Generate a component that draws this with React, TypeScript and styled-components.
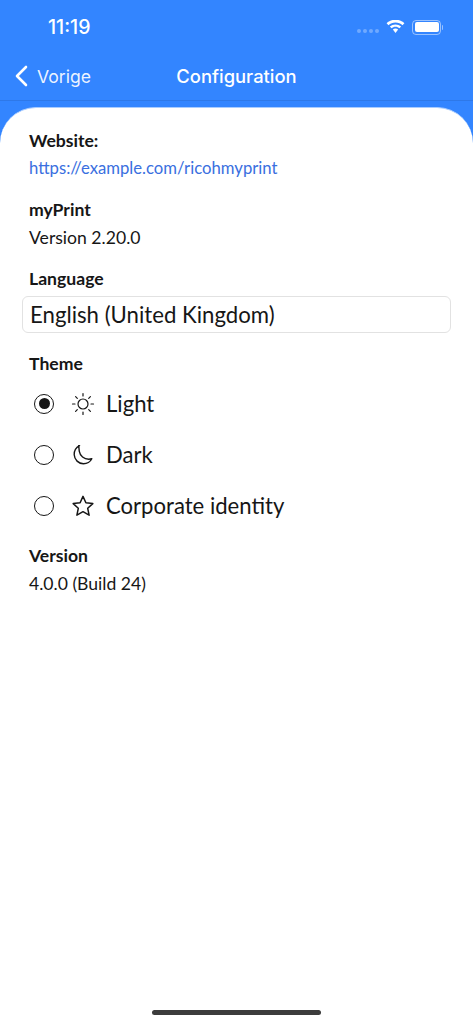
import React from 'react';
import styled, { createGlobalStyle } from 'styled-components';

const Global = createGlobalStyle`
  html, body { margin: 0; padding: 0; background: #fff; }
  body { font-family: Lato, "Liberation Sans", sans-serif; color: #161616; }
`;

const Page = styled.div`
  width: 473px;
  height: 1024px;
  background: #3385ff;
  display: flex;
  flex-direction: column;
  overflow: hidden;
  position: relative;
`;

const StatusBar = styled.div`
  height: 54px;
  flex-shrink: 0;
  display: flex;
  align-items: center;
  justify-content: space-between;
  padding: 0 32px 0 48px;
  box-sizing: border-box;
`;

const Clock = styled.span`
  font-family: Inter, sans-serif;
  font-size: 19.5px;
  font-weight: 500;
  color: #fff;
`;

const StatusIcons = styled.div`
  display: flex;
  align-items: center;
`;

const SignalDots = styled.div`
  display: flex;
  gap: 2px;
  margin: 8px 7px 0 0;
`;

const SignalDot = styled.i`
  width: 4px;
  height: 4px;
  border-radius: 50%;
  background: rgba(255, 255, 255, 0.3);
`;

const Battery = styled.div`
  width: 29px;
  height: 15px;
  margin-left: 7px;
  padding: 1.5px;
  box-sizing: border-box;
  border: 1px solid rgba(255, 255, 255, 0.5);
  border-radius: 4px;
  position: relative;

  &::before {
    content: '';
    display: block;
    height: 100%;
    background: #fff;
    border-radius: 2px;
  }

  &::after {
    content: '';
    position: absolute;
    right: -3px;
    top: 4px;
    width: 1.5px;
    height: 5px;
    background: rgba(255, 255, 255, 0.5);
    border-radius: 0 1px 1px 0;
  }
`;

const NavBar = styled.div`
  height: 47px;
  flex-shrink: 0;
  display: grid;
  grid-template-columns: 1fr auto 1fr;
  align-items: center;
  box-sizing: border-box;
  padding: 0 0 2px 14px;
  border-bottom: 1px solid #2e78e8;
  color: #fff;
  font-family: Inter, sans-serif;
`;

const BackLink = styled.div`
  display: flex;
  align-items: center;
  gap: 9px;
  font-size: 17.6px;
  color: rgba(255, 255, 255, 0.92);
`;

const NavTitle = styled.div`
  font-size: 18.4px;
  font-weight: 500;
  margin-left: -14px;
`;

const Sheet = styled.main`
  flex: 1;
  margin-top: 6px;
  background: #fff;
  border-top: 1px solid #a9ccff;
  border-radius: 36px 36px 0 0;
  padding: 21px 22px 0;
  display: flex;
  flex-direction: column;
`;

const Label = styled.div<{ $gap: number }>`
  font-size: 17.6px;
  font-weight: 700;
  line-height: 24px;
  padding-left: 7px;
  margin-top: ${p => p.$gap}px;
`;

const Value = styled.div`
  font-size: 17.6px;
  line-height: 24px;
  padding-left: 7px;
  margin-top: 4px;
`;

const WebLink = styled(Value)`
  font-size: 16.7px;
  color: #3a6fe0;
  margin-top: 3px;
`;

const Select = styled.div`
  height: 37px;
  margin-top: 5px;
  box-sizing: border-box;
  border: 1px solid #e2e2e2;
  border-radius: 6px;
  padding-left: 7px;
  font-size: 22.2px;
  line-height: 35px;
`;

const RadioList = styled.div`
  display: flex;
  flex-direction: column;
  padding-left: 12px;
  margin-top: 2px;
`;

const RadioRow = styled.div`
  height: 51px;
  display: flex;
  align-items: center;
  font-size: 22.1px;
`;

const Radio = styled.span<{ $on?: boolean }>`
  width: 20px;
  height: 20px;
  box-sizing: border-box;
  border: 1.5px solid #161616;
  border-radius: 50%;
  display: flex;
  align-items: center;
  justify-content: center;

  &::after {
    content: '';
    width: 11px;
    height: 11px;
    border-radius: 50%;
    background: ${p => (p.$on ? '#161616' : 'transparent')};
  }
`;

const IconSlot = styled.span`
  width: 24px;
  height: 24px;
  margin: 0 11px 0 17px;
  display: flex;
`;

const HomeBar = styled.div`
  position: absolute;
  left: 152px;
  bottom: 9px;
  width: 169px;
  height: 5px;
  border-radius: 3px;
  background: #3c3c3c;
`;

const SunIcon = () => (
  <svg width="24" height="24" viewBox="0 0 24 24" fill="none" stroke="#161616" strokeWidth="1.2" strokeLinecap="round">
    <circle cx="12" cy="12" r="5" />
    <path d="M12 1.500v2.500M12 20v2.500M1.500 12H4M20 12h2.500M4.600 4.600l1.700 1.700M17.700 17.700l1.700 1.700M4.600 19.400l1.700-1.700M17.700 6.300l1.700-1.700" />
  </svg>
);

const MoonIcon = () => (
  <svg width="24" height="24" viewBox="0 0 24 24" fill="none" stroke="#161616" strokeWidth="1.4" strokeLinejoin="round">
    <path d="M8.600 2.600C5 4.500 3 8 3.200 11.800c.3 5 4.300 8.900 9.200 8.900 3.600 0 6.800-1.900 8.400-5-1 .3-2 .5-3 .5-4.800 0-8.700-3.300-9.500-7.900-.3-1.900-.2-3.500-.7-5.700z" />
  </svg>
);

const StarIcon = () => (
  <svg width="24" height="24" viewBox="0 0 24 24" fill="none" stroke="#161616" strokeWidth="1.5" strokeLinejoin="round">
    <path d="M12 2.400l2.900 6.300 6.900.9-5.100 4.700 1.400 6.900-6.100-3.500-6.100 3.500 1.400-6.900-5.100-4.700 6.900-.9z" />
  </svg>
);

const WifiIcon = () => (
  <svg width="19" height="14" viewBox="0 0 19 14" fill="#fff">
    <path d="M9.500 2.400c2.700 0 5.100 1 7 2.800l1.900-2C16 .9 12.900-.3 9.500-.3S3 .9.600 3.200l1.900 2c1.900-1.800 4.300-2.800 7-2.800z" />
    <path d="M9.500 6.700c1.500 0 2.900.6 4 1.600l1.600-1.700c-1.500-1.400-3.500-2.200-5.600-2.200s-4.100.8-5.600 2.200l1.600 1.700c1.100-1 2.500-1.600 4-1.600z" />
    <path d="M9.500 8.600c-1 0-1.900.4-2.600 1l2.600 3.400 2.600-3.400c-.7-.6-1.600-1-2.600-1z" />
  </svg>
);

const themes = [
  { label: 'Light', icon: <SunIcon />, on: true },
  { label: 'Dark', icon: <MoonIcon />, on: false },
  { label: 'Corporate identity', icon: <StarIcon />, on: false },
];

export default function App() {
  return (
    <Page>
      <Global />
      <StatusBar>
        <Clock>11:19</Clock>
        <StatusIcons>
          <SignalDots>
            {[0, 1, 2, 3].map(i => <SignalDot key={i} />)}
          </SignalDots>
          <WifiIcon />
          <Battery />
        </StatusIcons>
      </StatusBar>
      <NavBar>
        <BackLink>
          <svg width="14" height="22" viewBox="0 0 14 22" fill="none" stroke="#fff" strokeWidth="2.6" strokeLinecap="round" strokeLinejoin="round">
            <path d="M12 2 3 11l9 9" />
          </svg>
          Vorige
        </BackLink>
        <NavTitle>Configuration</NavTitle>
        <span />
      </NavBar>
      <Sheet>
        <Label $gap={0}>Website:</Label>
        <WebLink>https://example.com/ricohmyprint</WebLink>
        <Label $gap={18}>myPrint</Label>
        <Value>Version 2.20.0</Value>
        <Label $gap={17}>Language</Label>
        <Select>English (United Kingdom)</Select>
        <Label $gap={19}>Theme</Label>
        <RadioList>
          {themes.map(t => (
            <RadioRow key={t.label}>
              <Radio $on={t.on} />
              <IconSlot>{t.icon}</IconSlot>
              {t.label}
            </RadioRow>
          ))}
        </RadioList>
        <Label $gap={13}>Version</Label>
        <Value>4.0.0 (Build 24)</Value>
      </Sheet>
      <HomeBar />
    </Page>
  );
}
